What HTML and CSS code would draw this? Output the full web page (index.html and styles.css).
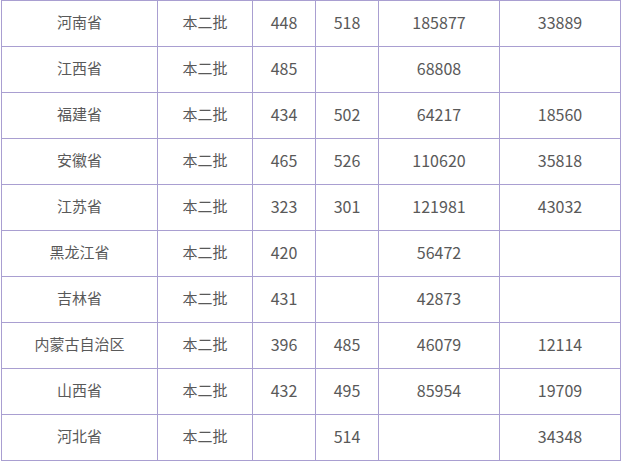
FILE: index.html
```html
<!DOCTYPE html>
<html lang="zh-CN">
<head>
<meta charset="utf-8">
<title>录取分数线</title>
<link rel="stylesheet" href="styles.css">
</head>
<body>
<table class="score-table">
  <colgroup>
    <col class="c1"><col class="c2"><col class="c3"><col class="c4"><col class="c5"><col class="c6">
  </colgroup>
  <tbody>
    <tr><td>河南省</td><td>本二批</td><td class="n">448</td><td class="n">518</td><td class="n">185877</td><td class="n">33889</td></tr>
    <tr><td>江西省</td><td>本二批</td><td class="n">485</td><td class="n"></td><td class="n">68808</td><td class="n"></td></tr>
    <tr><td>福建省</td><td>本二批</td><td class="n">434</td><td class="n">502</td><td class="n">64217</td><td class="n">18560</td></tr>
    <tr><td>安徽省</td><td>本二批</td><td class="n">465</td><td class="n">526</td><td class="n">110620</td><td class="n">35818</td></tr>
    <tr><td>江苏省</td><td>本二批</td><td class="n">323</td><td class="n">301</td><td class="n">121981</td><td class="n">43032</td></tr>
    <tr><td>黑龙江省</td><td>本二批</td><td class="n">420</td><td class="n"></td><td class="n">56472</td><td class="n"></td></tr>
    <tr><td>吉林省</td><td>本二批</td><td class="n">431</td><td class="n"></td><td class="n">42873</td><td class="n"></td></tr>
    <tr><td>内蒙古自治区</td><td>本二批</td><td class="n">396</td><td class="n">485</td><td class="n">46079</td><td class="n">12114</td></tr>
    <tr><td>山西省</td><td>本二批</td><td class="n">432</td><td class="n">495</td><td class="n">85954</td><td class="n">19709</td></tr>
    <tr><td>河北省</td><td>本二批</td><td class="n"></td><td class="n">514</td><td class="n"></td><td class="n">34348</td></tr>
  </tbody>
</table>
</body>
</html>
```
FILE: styles.css
```css
html, body {
  margin: 0;
  padding: 0;
  background: #ffffff;
}
body {
  font-family: "Noto Sans CJK SC", "Noto Sans", sans-serif;
  font-size: 15px;
  color: #595959;
}
.score-table {
  margin-left: 1px;
  width: 620px;
  table-layout: fixed;
  border-collapse: separate;
  border-spacing: 0;
  border-top: 1px solid #a99fd1;
  border-left: 1px solid #a99fd1;
}
.c1 { width: 156px; }
.c2 { width: 95px; }
.c3 { width: 63px; }
.c4 { width: 63px; }
.c5 { width: 121px; }
.c6 { width: 121px; }
.score-table td {
  box-sizing: border-box;
  height: 46px;
  padding: 0 0 4px 0;
  text-align: center;
  vertical-align: middle;
  border-right: 1px solid #a99fd1;
  border-bottom: 1px solid #a99fd1;
  line-height: 20px;
  white-space: nowrap;
}
.score-table td.n {
  font-size: 16px;
}
```
